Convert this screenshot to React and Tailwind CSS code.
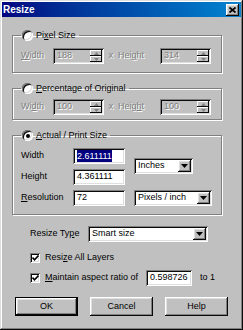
const SUNKEN =
  'shadow-[inset_1px_1px_0_#808080,inset_-1px_-1px_0_#ffffff,inset_2px_2px_0_#0a0a0a,inset_-2px_-2px_0_#dfdfdf]';
const RAISED =
  'shadow-[inset_-1px_-1px_0_#0a0a0a,inset_1px_1px_0_#ffffff,inset_-2px_-2px_0_#808080,inset_2px_2px_0_#dfdfdf]';
const DISABLED = 'text-[#808080] [text-shadow:1px_1px_0_#ffffff]';

function U({ children }) {
  return <span className="underline underline-offset-1">{children}</span>;
}

function Radio({ checked }) {
  return (
    <span
      className={`w-[11px] h-[11px] rounded-full bg-white flex items-center justify-center ${SUNKEN}`}
    >
      {checked && <span className="w-[4px] h-[4px] rounded-full bg-black" />}
    </span>
  );
}

function Group({ label, checked, className, children }) {
  return (
    <fieldset
      className={`w-[210px] border border-[#808080] shadow-[inset_1px_1px_0_#ffffff,1px_1px_0_#ffffff] px-[8px] ${className}`}
    >
      <legend className="pl-[1px] pr-[3px]">
        <span className="flex items-center gap-[3px] h-[11px]">
          <Radio checked={checked} />
          <span>{label}</span>
        </span>
      </legend>
      {children}
    </fieldset>
  );
}

function Arrow({ up, color }) {
  return (
    <svg width="5" height="3" viewBox="0 0 5 3">
      <polygon points={up ? '0,3 5,3 2.5,0' : '0,0 5,0 2.5,3'} fill={color} />
    </svg>
  );
}

function SpinBox({ value }) {
  return (
    <div className={`w-[51px] h-[16px] bg-[#c0c0c0] flex items-center p-[2px] ${SUNKEN}`}>
      <span className={`pl-[2px] flex-1 ${DISABLED}`}>{value}</span>
      <div className="w-[12px] h-full flex flex-col">
        <div className="flex-1 bg-[#c0c0c0] shadow-[inset_-1px_-1px_0_#0a0a0a,inset_1px_1px_0_#ffffff] flex items-center justify-center">
          <Arrow up color="#808080" />
        </div>
        <div className="flex-1 bg-[#c0c0c0] shadow-[inset_-1px_-1px_0_#0a0a0a,inset_1px_1px_0_#ffffff] flex items-center justify-center">
          <Arrow color="#808080" />
        </div>
      </div>
    </div>
  );
}

function SizeRow({ w, h, wLabel, hLabel }) {
  return (
    <div className="flex items-center">
      <span className={`w-[32px] ${DISABLED}`}>{wLabel}</span>
      <SpinBox value={w} />
      <span className={`w-[14px] text-center ${DISABLED}`}>x</span>
      <span className={`w-[42px] ${DISABLED}`}>{hLabel}</span>
      <SpinBox value={h} />
    </div>
  );
}

function TextBox({ className, children }) {
  return (
    <div className={`h-[16px] bg-white flex items-center pl-[4px] ${SUNKEN} ${className}`}>
      {children}
    </div>
  );
}

function Select({ className, value }) {
  return (
    <div className={`h-[16px] bg-white flex items-center p-[2px] ${SUNKEN} ${className}`}>
      <span className="pl-[2px] flex-1">{value}</span>
      <div className={`w-[13px] h-full bg-[#c0c0c0] flex items-center justify-center ${RAISED}`}>
        <svg width="7" height="4" viewBox="0 0 7 4">
          <polygon points="0,0 7,0 3.5,4" fill="#000" />
        </svg>
      </div>
    </div>
  );
}

function Check() {
  return (
    <span className={`w-[10px] h-[10px] bg-white flex items-center justify-center ${SUNKEN}`}>
      <svg width="7" height="6" viewBox="0 0 7 6">
        <path d="M0.5 2.5 L2.5 4.8 L6.5 0.5" stroke="#000" strokeWidth="1.6" fill="none" />
      </svg>
    </span>
  );
}

function Button({ children, isDefault }) {
  return (
    <div
      className={`w-[63px] h-[19px] bg-[#c0c0c0] flex items-center justify-center ${
        isDefault ? 'border border-black' : ''
      } ${RAISED}`}
    >
      {children}
    </div>
  );
}

export default function App() {
  return (
    <div
      className="w-[243px] h-[330px] bg-[#c0c0c0] p-[2px] text-[9px] text-black font-['Liberation_Sans',Arial,sans-serif] shadow-[inset_-1px_-1px_0_#0a0a0a,inset_1px_1px_0_#dfdfdf,inset_-2px_-2px_0_#808080,inset_2px_2px_0_#ffffff]"
    >
      <div className="h-[15px] bg-linear-to-r from-[#000080] to-[#1084d0] flex items-center justify-between pl-[1px] pr-[2px]">
        <span className="text-white font-bold text-[10px]">Resize</span>
        <div className={`w-[13px] h-[12px] bg-[#c0c0c0] flex items-center justify-center ${RAISED}`}>
          <svg width="7" height="6" viewBox="0 0 7 6">
            <path d="M0.5 0.5 L6.5 5.5 M6.5 0.5 L0.5 5.5" stroke="#000" strokeWidth="1.7" />
          </svg>
        </div>
      </div>

      <div className="pl-[10px] flex flex-col">
        <Group
          className="mt-[13px] pt-[7px] pb-[8px]"
          label={<>Pi<U>x</U>el Size</>}
        >
          <SizeRow
            w="188"
            h="314"
            wLabel={<><U>W</U>idth</>}
            hLabel={<>Hei<U>g</U>ht</>}
          />
        </Group>

        <Group
          className="mt-[10px] pt-[5px] pb-[4px]"
          label={<><U>P</U>ercentage of Original</>}
        >
          <SizeRow
            w="100"
            h="100"
            wLabel={<>Wi<U>d</U>th</>}
            hLabel={<>Heig<U>h</U>t</>}
          />
        </Group>

        <Group
          className="mt-[10px] pt-[7px] pb-[8px]"
          checked
          label={<><U>A</U>ctual / Print Size</>}
        >
          <div className="flex">
            <div className="flex flex-col gap-[5px]">
              <div className="flex items-center">
                <span className="w-[52px]">Width</span>
                <TextBox className="w-[52px]">
                  <span className="bg-[#000080] text-white leading-[12px]">2.611111</span>
                </TextBox>
              </div>
              <div className="flex items-center">
                <span className="w-[52px]">Height</span>
                <TextBox className="w-[52px]">4.361111</TextBox>
              </div>
              <div className="flex items-center">
                <span className="w-[52px]">
                  <U>R</U>esolution
                </span>
                <TextBox className="w-[52px]">72</TextBox>
              </div>
            </div>
            <div className="ml-[9px] flex flex-col justify-between">
              <Select className="w-[59px] mt-[10px]" value="Inches" />
              <Select className="w-[78px]" value="Pixels / inch" />
            </div>
          </div>
        </Group>

        <div className="mt-[11px] ml-[18px] flex items-center">
          <span className="w-[58px]">
            Resize Ty<U>p</U>e
          </span>
          <Select className="w-[120px]" value="Smart size" />
        </div>

        <div className="mt-[10px] ml-[18px] flex items-center gap-[5px] h-[11px]">
          <Check />
          <span>
            Resi<U>z</U>e All Layers
          </span>
        </div>

        <div className="mt-[7px] ml-[18px] flex items-center">
          <Check />
          <span className="ml-[5px] w-[101px]">
            <U>M</U>aintain aspect ratio of
          </span>
          <TextBox className="w-[46px]">0.598726</TextBox>
          <span className="ml-[8px]">to 1</span>
        </div>

        <div className="mt-[11px] ml-[3px] flex gap-[12px]">
          <Button isDefault>OK</Button>
          <Button>Cancel</Button>
          <Button>Help</Button>
        </div>
      </div>
    </div>
  );
}
